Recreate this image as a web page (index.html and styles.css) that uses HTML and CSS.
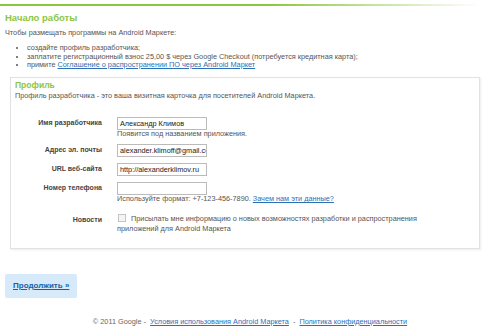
FILE: index.html
```html
<html>
<head>
<meta charset="utf-8">
<link rel="stylesheet" href="styles.css">
</head>
<body>
<div class="top-line"></div>

<div class="page">
  <h1 class="main-header">Начало работы</h1>
  <p class="intro">Чтобы размещать программы на Android Маркете:</p>
  <ul class="steps">
    <li>создайте профиль разработчика;</li>
    <li>заплатите регистрационный взнос 25,00 $ через Google Checkout (потребуется кредитная карта);</li>
    <li>примите <a href="#">Соглашение о распространении ПО через Android Маркет</a></li>
  </ul>

  <div class="profile-box">
    <h2>Профиль</h2>
    <p class="desc">Профиль разработчика - это ваша визитная карточка для посетителей Android Маркета.</p>

    <div class="form-row first">
      <label>Имя разработчика</label>
      <div class="field">
        <div class="input">Александр Климов</div>
        <div class="hint">Появится под названием приложения.</div>
      </div>
    </div>

    <div class="form-row">
      <label>Адрес эл. почты</label>
      <div class="field">
        <div class="input">alexander.klimoff@gmail.com</div>
      </div>
    </div>

    <div class="form-row">
      <label>URL веб-сайта</label>
      <div class="field">
        <div class="input">http://alexanderklimov.ru</div>
      </div>
    </div>

    <div class="form-row">
      <label>Номер телефона</label>
      <div class="field">
        <div class="input"></div>
        <div class="hint">Используйте формат: +7-123-456-7890. <a href="#">Зачем нам эти данные?</a></div>
      </div>
    </div>

    <div class="form-row news">
      <label>Новости</label>
      <div class="field">
        <span class="check"></span>Присылать мне информацию о новых возможностях разработки и распространения приложений для Android Маркета
      </div>
    </div>
  </div>

  <div class="actions">
    <a class="continue" href="#">Продолжить »</a>
  </div>

  <footer>
    © 2011 Google - &nbsp;<a href="#">Условия использования Android Маркета</a> &nbsp;- &nbsp;<a href="#">Политика конфиденциальности</a>
  </footer>
</div>
</body>
</html>
```

FILE: styles.css
```css
body {
  margin: 0;
  background: #fff;
  font-family: "Liberation Sans", Arial, sans-serif;
  font-size: 7.3px;
  color: #555;
}
a {
  color: #2b6fb6;
}
.top-line {
  height: 2px;
  margin-top: 4px;
  width: 490px;
  background: linear-gradient(to right, #8cc63f 0%, #8cc63f 55%, rgba(140,198,63,0) 98%);
}
.page {
  padding: 0 5px;
}
.main-header {
  margin: 5px 0 0;
  font-size: 9.5px;
  line-height: 13px;
  color: #8cc63f;
}
.intro {
  margin: 4px 0 0;
  line-height: 10px;
}
.steps {
  margin: 6px 0 0;
  padding-left: 22px;
  line-height: 8.5px;
}
.profile-box {
  margin: 7px 15px 0 5px;
  border: 1px solid #e2e2e2;
  box-shadow: 1px 1px 2px rgba(0,0,0,0.08);
  padding: 1px 4px 13px;
}
.profile-box h2 {
  margin: 0;
  font-size: 8.5px;
  line-height: 12px;
  color: #8cc63f;
}
.desc {
  margin: 0;
  line-height: 10px;
}
.form-row {
  display: grid;
  grid-template-columns: 87px 300px;
  column-gap: 15px;
  margin-top: 6px;
}
.form-row.first {
  margin-top: 16px;
}
.form-row label {
  text-align: right;
  font-weight: bold;
  font-size: 7px;
  color: #444;
  padding-top: 1px;
  line-height: 9px;
}
.input {
  width: 86px;
  height: 11px;
  border: 1px solid #bbb;
  padding: 0 0 0 2px;
  font-size: 7.3px;
  line-height: 11px;
  color: #222;
  overflow: hidden;
  white-space: nowrap;
}
.hint {
  line-height: 8.5px;
}
.news {
  margin-top: 10px;
}
.news .field {
  line-height: 10.5px;
}
.check {
  display: inline-block;
  width: 6px;
  height: 6px;
  border: 1px solid #c4c4c4;
  background: #f4f4f4;
  margin: 0 5px 0 1px;
  vertical-align: -1px;
}
.actions {
  display: flex;
  margin-top: 25px;
}
.continue {
  padding: 0 8px;
  height: 24px;
  line-height: 24px;
  background: #d6eafa;
  border-radius: 2px;
  font-weight: bold;
  font-size: 8px;
  color: #1d5f9d;
}
footer {
  margin-top: 19px;
  text-align: center;
  line-height: 10px;
  color: #666;
}
```
